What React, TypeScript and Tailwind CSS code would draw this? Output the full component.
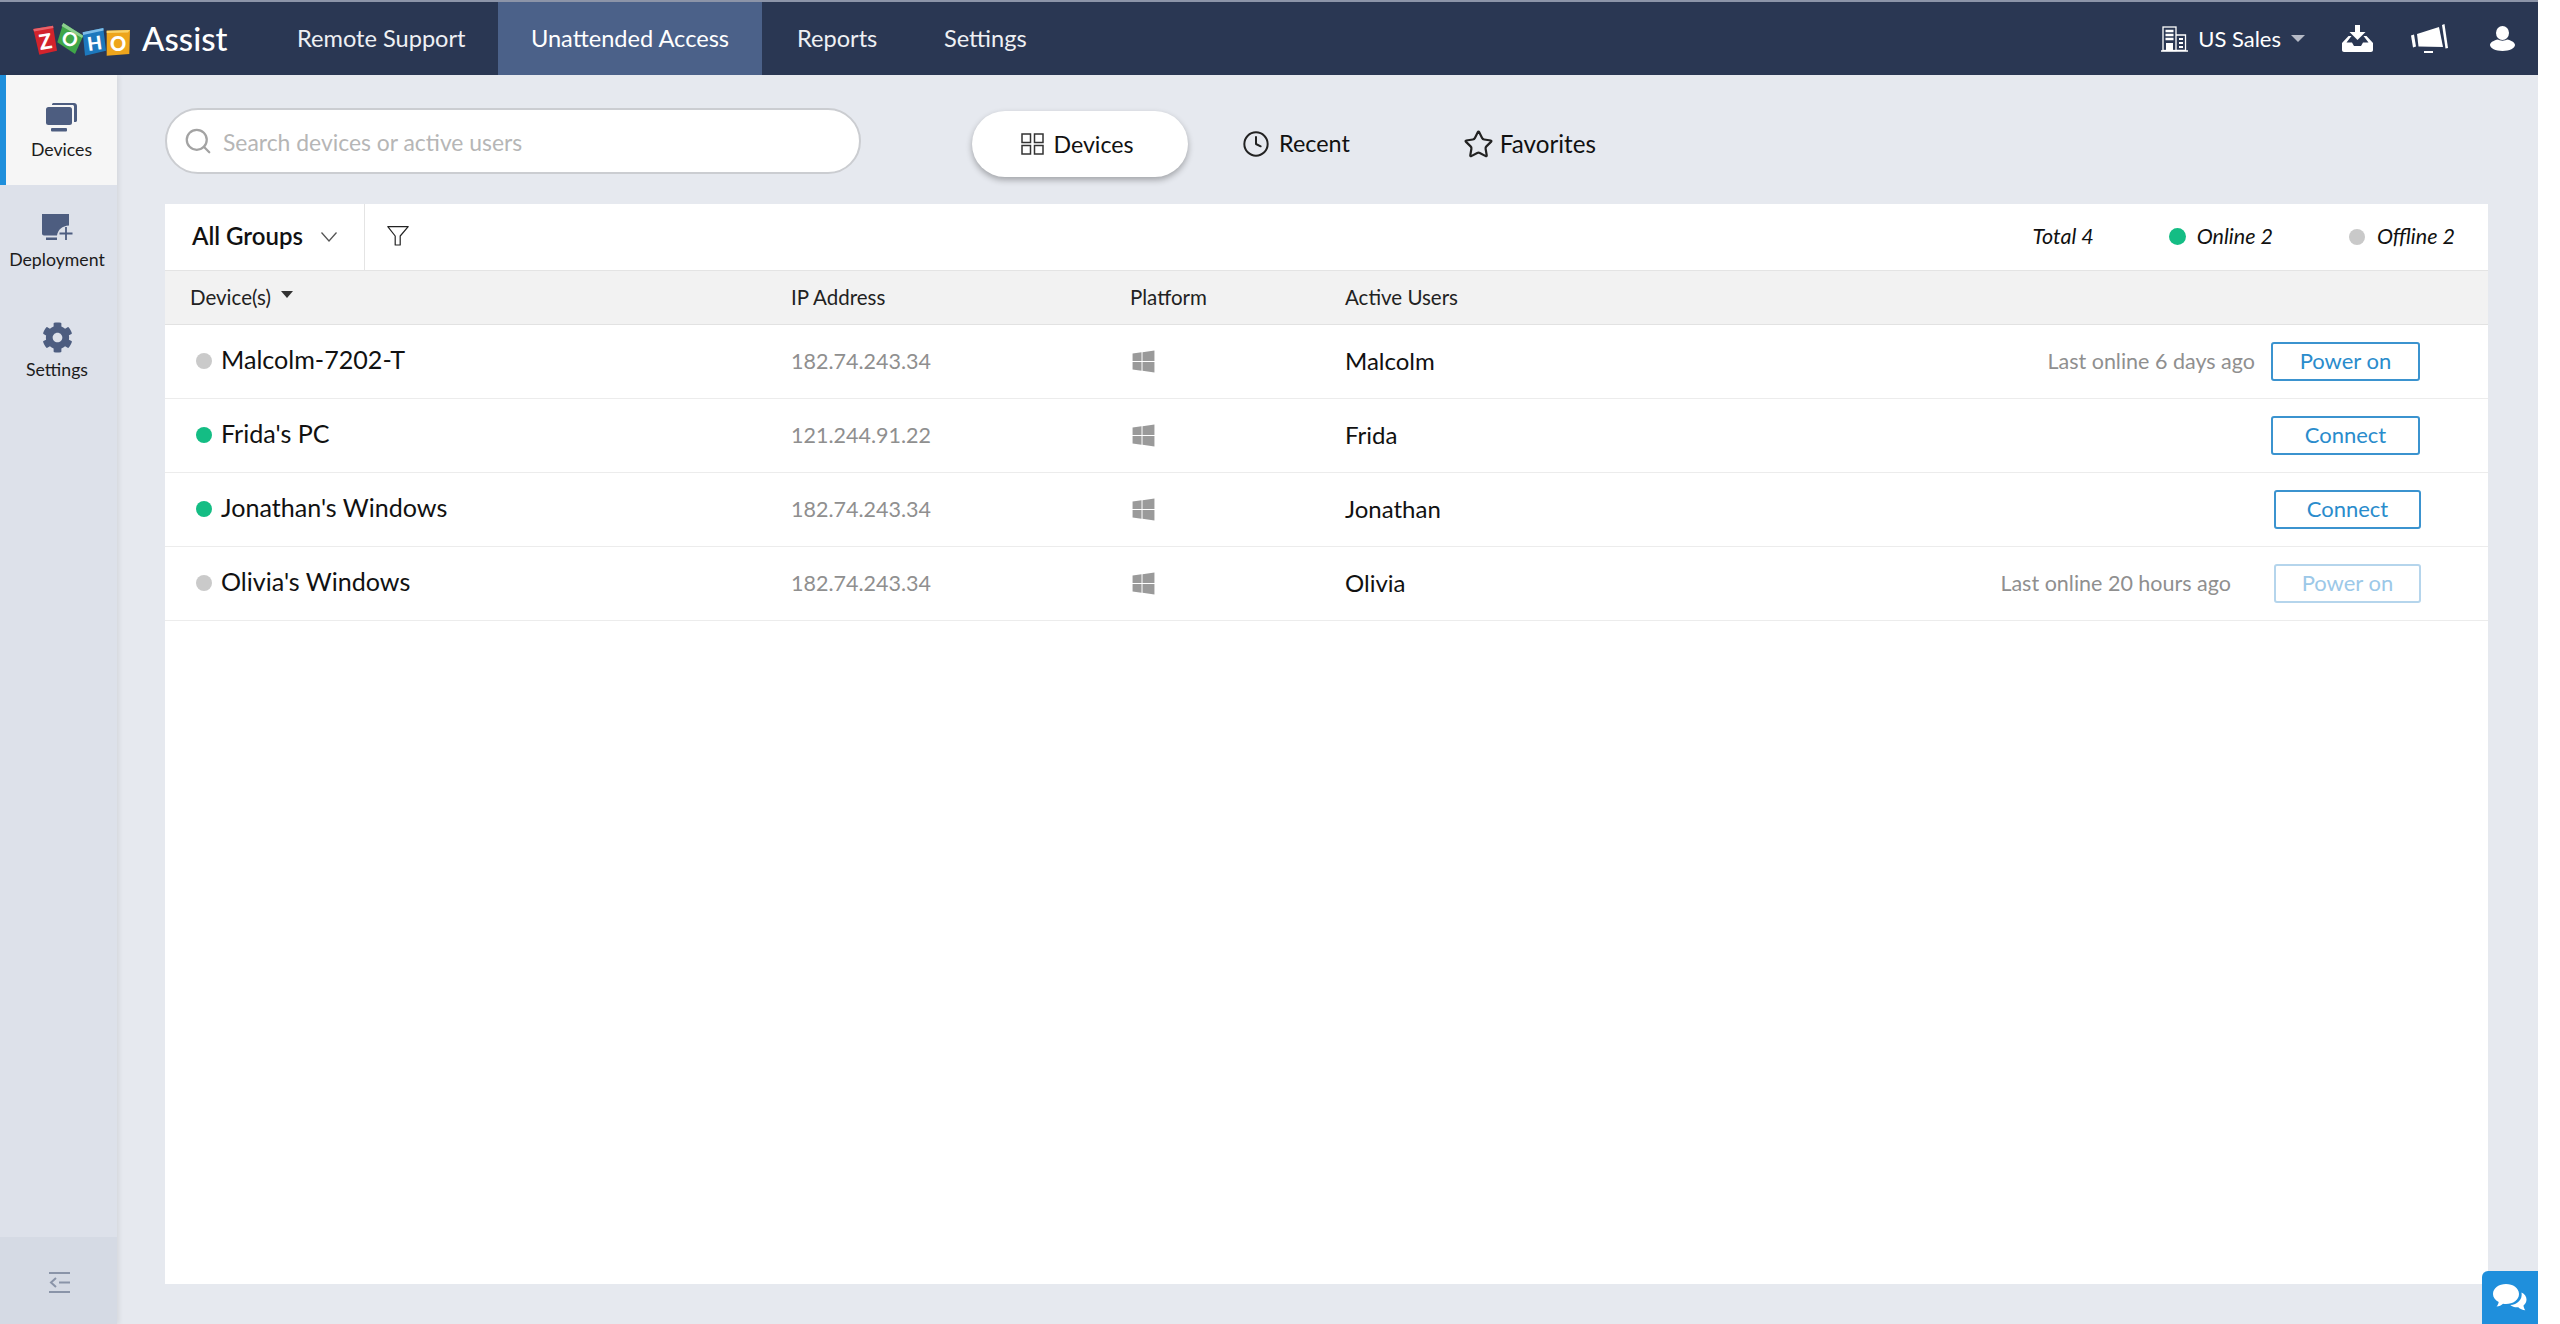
import { Clock, Search, Star } from "lucide-react";
import { FaCog, FaWindows } from "react-icons/fa";

const ZohoLogo = () => (
  <svg width="97" height="34" viewBox="0 0 97 34" className="shrink-0">
    <polygon points="0.3,7 20,3.7 24,28.7 6.3,32.7" fill="#d2232c" />
    <polygon points="0.3,7 20,3.7 20.5,6 1,9.5" fill="#e8636a" />
    <polygon points="30.3,1 50.3,13.7 42,32 24.3,20.3" fill="#3fa648" />
    <polygon points="30.3,1 50.3,13.7 49,16 28.5,4" fill="#8ccf8f" />
    <polygon points="49.7,10.3 70.3,6 73,28.7 52,33.7" fill="#1d78bd" />
    <polygon points="49.7,10.3 70.3,6 70.6,8.5 50,13" fill="#7dbde8" />
    <polygon points="73.7,8.7 97,8 96.3,32 73.7,33.7" fill="#eea51c" />
    <polygon points="73.7,8.7 97,8 95,10.5 73.7,11" fill="#f9d36a" />
    <text x="12.5" y="27" fontSize="21" fontWeight="900" fill="#fff" textAnchor="middle" transform="rotate(-10 12.5 20)">Z</text>
    <text x="37" y="24" fontSize="19" fontWeight="900" fill="#fff" textAnchor="middle" transform="rotate(25 37 17)">O</text>
    <text x="61.5" y="28" fontSize="19" fontWeight="900" fill="#fff" textAnchor="middle" transform="rotate(-8 61.5 21)">H</text>
    <text x="85" y="28.5" fontSize="20" fontWeight="900" fill="#fff" textAnchor="middle">O</text>
  </svg>
);

const DevicesIcon = () => (
  <svg width="31" height="29" viewBox="0 0 31 29" fill="#4d5d80">
    <path d="M6 1.5C6 .7 6.7 0 7.5 0H28c1.7 0 3 1.3 3 3v14.5c0 .8-.7 1.5-1.5 1.5H28V3.5c0-.8-.7-1.5-1.5-1.5H6z" />
    <rect x="0" y="4" width="26" height="18" rx="2.5" />
    <rect x="5" y="25" width="16" height="3.5" rx="1" />
  </svg>
);

const DeploymentIcon = () => (
  <svg width="31" height="27" viewBox="0 0 31 27">
    <path d="M0 0h27v11.5c-7 .5-11 4-12 10H2c-1.1 0-2-.9-2-2z" fill="#4d5d80" />
    <rect x="4" y="23.5" width="11" height="2.5" fill="#4d5d80" />
    <path d="M24 13v13M17.5 19.5h13" stroke="#4d5d80" strokeWidth="1.8" fill="none" />
  </svg>
);

const BuildingIcon = () => (
  <svg width="27" height="26" viewBox="0 0 27 26" fill="none" stroke="#fff" strokeWidth="1.3">
    <rect x="2" y="1" width="13" height="23.5" />
    <path d="M15 9h9.5v15.5H15M0 25h27" />
    <path d="M4.5 5h8M4.5 9h8M4.5 13h8" strokeWidth="2.4" />
    <rect x="5" y="17" width="7" height="7" fill="#fff" stroke="none" />
    <path d="M18 13h4M18 17h4M18 21h4" strokeWidth="2" />
  </svg>
);

const DownloadIcon = () => (
  <svg width="31" height="27" viewBox="0 0 31 27" fill="#fff">
    <path d="M13 0h5v7h5.5L15.5 15 7.5 7H13z" />
    <path d="M6.5 11h3l-5 6.5H10l2 3.5h7l2-3.5h5.5l-5-6.5h3L31 18v7c0 1.1-.9 2-2 2H2c-1.1 0-2-.9-2-2v-7z" />
  </svg>
);

const MegaphoneIcon = () => (
  <svg width="37" height="30" viewBox="0 0 37 30" fill="#fff">
    <path d="M0 11.5l3-1 2 12-3 1z" />
    <path d="M6 10L28 3l4 20-24.5-.5z" />
    <path d="M31 1l2.5-1L37 24l-2.5.5z" />
    <rect x="13" y="27" width="9" height="2" />
  </svg>
);

const UserIcon = () => (
  <svg width="25" height="25" viewBox="0 0 25 25" fill="#fff">
    <ellipse cx="12.5" cy="7" rx="6.5" ry="7" />
    <path d="M8 13.5c1.5 1.5 7.5 1.5 9 0 4 .8 8 3 8 5.5 0 3-5.5 6-12.5 6S0 22 0 19c0-2.5 4-4.7 8-5.500z" />
  </svg>
);

const GridIcon = () => (
  <svg width="23" height="22" viewBox="0 0 23 22" fill="none" stroke="#333" strokeWidth="1.5">
    <rect x="1" y="1" width="8.5" height="8.5" />
    <rect x="13.5" y="1" width="8.5" height="8.5" />
    <rect x="1" y="12.5" width="8.5" height="8.5" />
    <rect x="13.5" y="12.5" width="8.5" height="8.5" />
  </svg>
);

const FilterIcon = () => (
  <svg width="22" height="20" viewBox="0 0 22 20" fill="none" stroke="#222" strokeWidth="1.2">
    <path d="M.8.7h20.4l-8 9.3v9h-5V10z" strokeLinejoin="round" />
  </svg>
);

const ChatIcon = () => (
  <svg width="34" height="28" viewBox="0 0 34 28" fill="#fff">
    <path d="M13 0c7 0 13 4 13 10s-6 10-13 10c-1 0-2 0-3-.3-1.5 1.500-4 2.800-6.500 2.800 1-1 2-2.600 2.200-4.500C2.200 16.200 0 13.300 0 10 0 4 6 0 13 0z" />
    <path d="M28.5 8.5c3.300 1.500 5 4.200 5 7 0 2.500-1.200 4.500-3 6 .1 1.800.8 3.300 1.800 4.800-2.800-.3-5.200-1.300-7-3-3 .3-6-.4-8-2.300 7-.2 12.500-5.500 11.200-12.500z" />
  </svg>
);

const CollapseIcon = () => (
  <svg width="21" height="21" viewBox="0 0 21 21" fill="none" stroke="#8a94a8" strokeWidth="2">
    <path d="M0 1h21M0 20h21M10 10.5h11" />
    <path d="M7 6l-5 4.5L7 15" />
  </svg>
);

const sideItems = [
  { label: "Devices", icon: <DevicesIcon />, active: true },
  { label: "Deployment", icon: <DeploymentIcon />, active: false },
  { label: "Settings", icon: <FaCog className="w-[31px] h-[31px] ml-[1px] text-[#4d5d80]" />, active: false },
];

const devices = [
  { name: "Malcolm-7202-T", ip: "182.74.243.34", user: "Malcolm", online: false, last: "Last online 6 days ago", action: "Power on", lastGap: "mr-[16px]", btn: "w-[149px] mr-[68px] border-[#3b93cf] text-[#2a8ccc]" },
  { name: "Frida's PC", ip: "121.244.91.22", user: "Frida", online: true, last: "", action: "Connect", lastGap: "", btn: "w-[149px] mr-[68px] border-[#3b93cf] text-[#2a8ccc]" },
  { name: "Jonathan's Windows", ip: "182.74.243.34", user: "Jonathan", online: true, last: "", action: "Connect", lastGap: "", btn: "w-[147px] mr-[67px] border-[#3b93cf] text-[#2a8ccc]" },
  { name: "Olivia's Windows", ip: "182.74.243.34", user: "Olivia", online: false, last: "Last online 20 hours ago", action: "Power on", lastGap: "mr-[43px]", btn: "w-[147px] mr-[67px] border-[#b5d5ec] text-[#9cc8e8]" },
];

export default function App() {
  return (
    <div className="relative flex flex-col w-[2538px] h-[1324px] overflow-hidden bg-[#e6e9ef] font-[Lato,sans-serif] text-[#111]">
      {/* Header */}
      <header className="flex items-stretch h-[75px] shrink-0 bg-[#2a3753] border-t-2 border-[#8c94a8] text-white">
        <div className="flex items-center pl-[33px] w-[297px] shrink-0">
          <ZohoLogo />
          <span className="ml-[12px] text-[33px] font-medium">Assist</span>
        </div>
        <nav className="flex items-stretch text-[23.6px] text-[#eef0f4]">
          <a className="flex items-center w-[201px]">Remote Support</a>
          <a className="flex items-center justify-center w-[264px] bg-[#4b6189] text-white">Unattended Access</a>
          <a className="flex items-center ml-[35px] w-[147px]">Reports</a>
          <a className="flex items-center">Settings</a>
        </nav>
        <div className="flex items-center ml-auto pr-[23px]">
          <BuildingIcon />
          <span className="ml-[10px] text-[22px]">US Sales</span>
          <span className="ml-[10px] w-0 h-0 border-x-[7px] border-x-transparent border-t-[7px] border-t-[#b5bac6]" />
          <span className="ml-[37px]"><DownloadIcon /></span>
          <span className="ml-[38px]"><MegaphoneIcon /></span>
          <span className="ml-[42px]"><UserIcon /></span>
        </div>
      </header>

      <div className="flex flex-1 min-h-0">
        {/* Sidebar */}
        <aside className="flex flex-col w-[117px] shrink-0 bg-[#dde1ea] shadow-[2px_0_5px_rgba(0,0,0,0.08)]">
          {sideItems.map((item) => (
            <div
              key={item.label}
              className={`flex flex-col items-center h-[110px] pt-[27px] ${item.active ? "bg-[#f6f6f6] border-l-[6px] border-[#1f8fdc]" : "pr-[3px]"}`}
            >
              <div className="h-[31px] flex items-center">{item.icon}</div>
              <span className="mt-[5px] text-[17.7px] leading-[24px] text-[#1c1c1c]">{item.label}</span>
            </div>
          ))}
          <div className="mt-auto flex items-center justify-center h-[87px] bg-[#d5dae4] pl-[1px] pt-[3px]">
            <CollapseIcon />
          </div>
        </aside>

        {/* Main */}
        <main className="flex flex-col flex-1 min-w-0 pl-[48px] pr-[50px] pb-[40px]">
          <div className="flex items-start h-[129px] shrink-0 pt-[33px]">
            <div className="flex items-center w-[696px] h-[66px] pl-[16px] bg-white border-2 border-[#cbcdd1] rounded-[33px]">
              <Search className="w-[30px] h-[30px] text-[#a3a3a3]" strokeWidth={1.8} />
              <span className="ml-[10px] mt-[2px] text-[22.9px] text-[#b6b6b6]">Search devices or active users</span>
            </div>
            <div className="flex items-center justify-center gap-[9px] w-[216px] h-[66px] ml-[111px] mt-[3px] pr-[5px] bg-white rounded-[33px] shadow-[0_3px_6px_rgba(0,0,0,0.3)] text-[23.2px]">
              <GridIcon />
              <span>Devices</span>
            </div>
            <div className="flex items-center gap-[9px] h-[66px] ml-[54px] mt-[3px] text-[23.4px]">
              <Clock className="w-[28px] h-[28px] text-[#222]" strokeWidth={1.7} />
              <span>Recent</span>
            </div>
            <div className="flex items-center gap-[6px] h-[66px] ml-[113px] mt-[3px] text-[24.2px]">
              <Star className="w-[31px] h-[31px] text-[#222]" strokeWidth={1.7} />
              <span>Favorites</span>
            </div>
          </div>

          <section className="flex flex-col flex-1 min-h-0 bg-white">
            {/* Toolbar */}
            <div className="flex items-stretch h-[67px] shrink-0 border-b border-[#e4e4e4]">
              <div className="flex items-center w-[200px] pl-[27px] pb-[2px] border-r border-[#e4e4e4]">
                <span className="text-[24px] font-semibold">All Groups</span>
                <svg width="16" height="10" viewBox="0 0 16 10" className="ml-[18px] mt-[2px]" fill="none" stroke="#555" strokeWidth="1.3">
                  <path d="M.5.5L8 9 15.5.5" />
                </svg>
              </div>
              <div className="flex items-center pl-[22px] pb-[3px]"><FilterIcon /></div>
              <div className="flex items-center ml-auto pr-[33px] pb-[1px] text-[21.5px] italic">
                <span>Total 4</span>
                <span className="ml-[75px] w-[17px] h-[17px] rounded-full bg-[#14bd84]" />
                <span className="ml-[11px]">Online 2</span>
                <span className="ml-[76px] w-[16px] h-[16px] rounded-full bg-[#c9c9c9]" />
                <span className="ml-[12px]">Offline 2</span>
              </div>
            </div>

            {/* Table head */}
            <div className="grid grid-cols-[626px_339px_215px_1fr] items-center h-[54px] shrink-0 bg-[#f2f2f2] border-b border-[#e2e2e2] text-[20.5px] text-[#222]">
              <div className="flex items-center pl-[25px]">
                <span>Device(s)</span>
                <span className="ml-[10px] mb-[6px] w-0 h-0 border-x-[6px] border-x-transparent border-t-[7px] border-t-[#333]" />
              </div>
              <span>IP Address</span>
              <span>Platform</span>
              <span>Active Users</span>
            </div>

            {/* Rows */}
            {devices.map((d) => (
              <div key={d.name} className="grid grid-cols-[626px_339px_215px_1fr] items-center h-[74px] shrink-0 border-b border-[#ececec]">
                <div className="flex items-center pl-[31px]">
                  <span className={`w-[16px] h-[16px] rounded-full ${d.online ? "bg-[#14bd84]" : "bg-[#cacaca]"}`} />
                  <span className="ml-[9px] mb-[4px] text-[25.1px]">{d.name}</span>
                </div>
                <span className="text-[21.5px] text-[#8f8f8f]">{d.ip}</span>
                <FaWindows className="ml-[1px] w-[25px] h-[25px] text-[#9a9a9a]" />
                <div className="flex items-center">
                  <span className="mb-[2px] text-[24px]">{d.user}</span>
                  <span className="ml-auto flex items-center">
                    {d.last && <span className={`text-[21.5px] text-[#8f8f8f] ${d.lastGap}`}>{d.last}</span>}
                    <button className={`h-[39px] pb-[2px] border-2 rounded-[3px] bg-white text-[22px] leading-none ${d.btn}`}>{d.action}</button>
                  </span>
                </div>
              </div>
            ))}
          </section>
        </main>
      </div>

      {/* Chat widget */}
      <div className="absolute right-0 bottom-0 flex items-center justify-center w-[56px] h-[53px] bg-[#1f8fdc] rounded-tl-[6px]">
        <ChatIcon />
      </div>
    </div>
  );
}
